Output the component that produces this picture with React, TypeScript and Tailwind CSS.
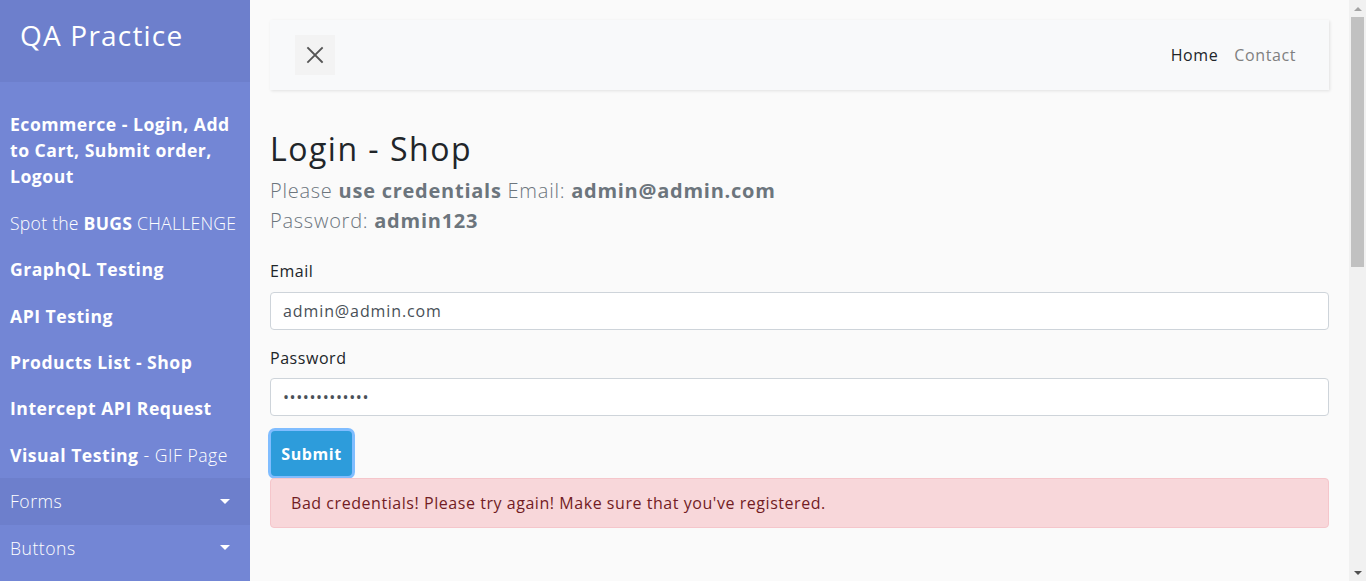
import React from "react";

const font = "font-['Open_Sans',_'Noto_Sans',_sans-serif]";

function Caret() {
  return (
    <span className="w-0 h-0 border-x-[5px] border-x-transparent border-t-[5px] border-t-white" />
  );
}

function Sidebar() {
  const item = "block px-[10px] py-[10px] text-[17.6px] leading-[26.4px] text-white";
  return (
    <nav className="w-[250px] shrink-0 h-full bg-[#7386d5] text-white">
      <div className="bg-[#6d7fcc] px-[20px] pt-[19px] pb-[29px]">
        <h3 className="text-[28px] leading-[33.6px] font-medium tracking-[1.2px]">QA Practice</h3>
      </div>
      <ul className="pt-[19px]">
        <li className={`${item} font-bold tracking-[0.5px]`}>Ecommerce - Login, Add to Cart, Submit order, Logout</li>
        <li className={`${item} font-light tracking-[0.25px] whitespace-nowrap`}>
          Spot the <b className="font-bold">BUGS</b> CHALLENGE
        </li>
        <li className={`${item} font-bold tracking-[0.5px]`}>GraphQL Testing</li>
        <li className={`${item} font-bold tracking-[0.5px]`}>API Testing</li>
        <li className={`${item} font-bold tracking-[0.5px]`}>Products List - Shop</li>
        <li className={`${item} font-bold tracking-[0.5px]`}>Intercept API Request</li>
        <li className={`${item} font-light tracking-[0.5px] whitespace-nowrap`}>
          <b className="font-bold">Visual Testing</b> - GIF Page
        </li>
        <li className="flex items-center justify-between pl-[10px] pr-[20px] py-[10px] text-[17.6px] leading-[26.4px] font-light tracking-[0.5px] bg-[#6d7fcc]">
          <span>Forms</span>
          <Caret />
        </li>
        <li className="flex items-center justify-between pl-[10px] pr-[20px] py-[10px] text-[17.6px] leading-[26.4px] font-light tracking-[0.5px]">
          <span>Buttons</span>
          <Caret />
        </li>
      </ul>
    </nav>
  );
}

function Scrollbar() {
  return (
    <div className="w-[17px] shrink-0 h-full bg-[#f1f1f1] flex flex-col items-center">
      <div className="h-[17px] w-full flex items-center justify-center">
        <span className="w-0 h-0 border-x-[4px] border-x-transparent border-b-[4px] border-b-[#a3a3a3]" />
      </div>
      <div className="w-[13px] h-[250px] bg-[#c1c1c1]" />
      <div className="flex-1" />
      <div className="h-[17px] w-full flex items-center justify-center">
        <span className="w-0 h-0 border-x-[4px] border-x-transparent border-t-[4px] border-t-[#505050]" />
      </div>
    </div>
  );
}

function Main() {
  return (
    <main className="flex-1 h-full bg-[#fafafa] p-[20px] overflow-hidden">
      <div className="h-[70px] bg-[#f8f9fa] shadow-[1px_1px_3px_rgba(0,0,0,0.1)] flex items-center justify-between px-[25px]">
        <button className="w-[40px] h-[40px] bg-[#f3f3f3] flex items-center justify-center">
          <svg width="18" height="18" viewBox="0 0 18 18" fill="none" stroke="#555" strokeWidth="1.8" strokeLinecap="square">
            <path d="M2 2 L16 16 M16 2 L2 16" />
          </svg>
        </button>
        <div className="flex items-center text-[16px] leading-[24px] tracking-[0.6px]">
          <a className="px-[8px] text-[#212529]">Home</a>
          <a className="px-[8px] text-[#808080]">Contact</a>
        </div>
      </div>

      <h2 className="mt-[40px] text-[32px] leading-[38.4px] text-[#212529] font-normal tracking-[1.5px]">Login - Shop</h2>
      <p className="mt-[8px] text-[20px] leading-[30px] font-light text-[#6c757d] tracking-[0.75px]">
        Please <b className="font-bold">use credentials</b> Email: <b className="font-bold">admin@admin.com</b>
        <br />
        Password: <b className="font-bold">admin123</b>
      </p>

      <form className="mt-[23px] tracking-[0.55px]" onSubmit={(e) => e.preventDefault()}>
        <div className="mb-[16px]">
          <label className="block text-[16px] leading-[24px] mb-[9px] text-[#212529]">Email</label>
          <input
            readOnly
            value="admin@admin.com"
            className="block w-full h-[38px] px-[12px] bg-white border border-[#ced4da] rounded-[4px] text-[16px] text-[#495057] tracking-[0.9px] outline-none"
          />
        </div>
        <div className="mb-[15px]">
          <label className="block text-[16px] leading-[24px] mb-[8px] text-[#212529]">Password</label>
          <input
            readOnly
            type="password"
            value="admin123admin"
            className="block w-full h-[38px] px-[12px] bg-white border border-[#ced4da] rounded-[4px] text-[16px] text-[#495057] tracking-[0.6px] outline-none"
          />
        </div>
        <button className="h-[45px] w-[81px] ml-[1px] bg-[#2d9cdb] text-white font-bold text-[16px] rounded-[4px] shadow-[0_0_0_3px_rgba(128,189,255,1)]">
          Submit
        </button>
      </form>
      <div className="relative mt-[2px] bg-[#f8d7da] border border-[#f5c6cb] rounded-[4px] text-[#721c24] text-[16px] leading-[24px] px-[20px] py-[12px] tracking-[0.55px]">
        Bad credentials! Please try again! Make sure that you've registered.
      </div>
    </main>
  );
}

export default function App() {
  return (
    <div className={`w-[1366px] h-[581px] flex overflow-hidden ${font}`}>
      <Sidebar />
      <Main />
      <Scrollbar />
    </div>
  );
}
